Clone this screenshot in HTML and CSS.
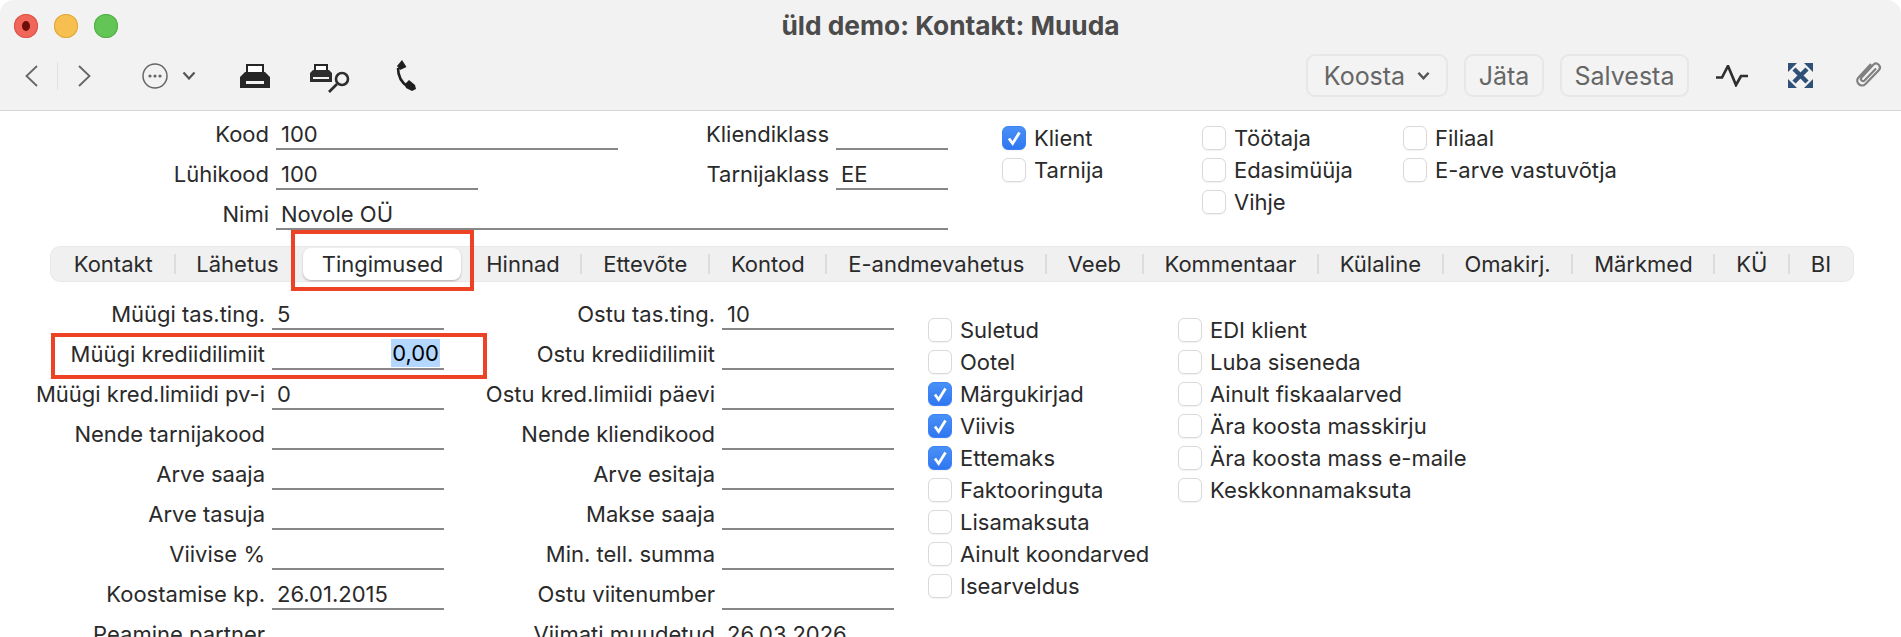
FILE: index.html
```html
<!DOCTYPE html>
<html lang="et">
<head>
<meta charset="utf-8">
<title>üld demo: Kontakt: Muuda</title>
<link rel="stylesheet" href="styles.css">
</head>
<body>
<div class="window">
  <header class="chrome">
    <div class="titlebar">
      <div class="lights">
        <span class="light red"><i></i></span>
        <span class="light yellow"></span>
        <span class="light green"></span>
      </div>
      <h1 class="title">üld demo: Kontakt: Muuda</h1>
    </div>
    <div class="toolbar">
      <div class="tools-left">
        <svg class="ic-nav" viewBox="0 0 13 22"><path d="M12 1 1.5 11 12 21"/></svg>
        <span class="nav-sep"></span>
        <svg class="ic-nav ic-next" viewBox="0 0 13 22"><path d="M1 1l10.500 10L1 21"/></svg>
        <svg class="ic-more" viewBox="0 0 26 26"><circle cx="13" cy="13" r="12"/><circle class="dot" cx="8" cy="13" r="1.600"/><circle class="dot" cx="13" cy="13" r="1.600"/><circle class="dot" cx="18" cy="13" r="1.600"/></svg>
        <svg class="ic-chev" viewBox="0 0 14 9"><path d="M1.500 1.500 7 7.500l5.500-6"/></svg>
        <svg class="ic-print" viewBox="0 0 30 24"><path class="paper" d="M7 1h16v10H7z"/><path d="M5 8h20l5 5v11H0V13zM6 17v3h18v-3z" fill-rule="evenodd"/></svg>
        <svg class="ic-preview" viewBox="0 0 40 29"><path class="paper" d="M5 1h12v7H5z"/><path d="M3 6h16l3 3v9H0V9zM3 13v2h16v-2z" fill-rule="evenodd"/><circle class="lens" cx="32" cy="15" r="6"/><path class="handle" d="M27 20l-8 8"/></svg>
        <svg class="ic-phone" viewBox="0 0 20 31"><path class="cord" d="M2 8C2 16 6 23 12 27"/><path d="M6 0 10.500 7 4 10 1 6zM13 20l6 5 1 4-4 2-6-3-1-4z"/></svg>
      </div>
      <div class="tools-right">
        <button class="tb-btn koosta">Koosta<svg class="ic-chev small" viewBox="0 0 14 9"><path d="M1.500 1.500 7 7.500l5.500-6"/></svg></button>
        <button class="tb-btn jata">Jäta</button>
        <button class="tb-btn salvesta">Salvesta</button>
        <svg class="ic-pulse" viewBox="0 0 32 22"><path d="M0 12.500h6L12 1l8 19 5-9h7"/></svg>
        <svg class="ic-expand" viewBox="0 0 25 25"><path class="cross" d="M6 6l13 13M19 6 6 19"/><path d="M0 0h9L0 9zM25 0h-9l9 9zM0 25h9l-9-9zM25 25h-9l9-9z"/></svg>
        <svg class="ic-clip" viewBox="0 0 29 32"><path d="M17 4 4.500 17.500c-4 4.500 2.500 11 7 6.500L25 10c3-3.500-2-8.500-5.500-5.500L7.500 17.500c-1.800 2 1 4.800 3 3L22 8.500"/></svg>
      </div>
    </div>
  </header>

  <main class="content">
    <section class="head">
      <div class="head-grid">
        <label class="lbl">Kood</label><div class="val span2">100</div>
        <label class="lbl">Kliendiklass</label><div class="val"></div>
        <label class="lbl">Lühikood</label><div class="val">100</div><div></div>
        <label class="lbl">Tarnijaklass</label><div class="val">EE</div>
        <label class="lbl">Nimi</label><div class="val span4">Novole OÜ</div>
      </div>
      <div class="checks checks-a">
        <div class="chk"><span class="box on"><svg viewBox="0 0 24 24"><path d="M6.500 12.500 10.500 18 18 6"/></svg></span>Klient</div>
        <div class="chk"><span class="box"></span>Tarnija</div>
      </div>
      <div class="checks checks-b">
        <div class="chk"><span class="box"></span>Töötaja</div>
        <div class="chk"><span class="box"></span>Edasimüüja</div>
        <div class="chk"><span class="box"></span>Vihje</div>
      </div>
      <div class="checks">
        <div class="chk"><span class="box"></span>Filiaal</div>
        <div class="chk"><span class="box"></span>E-arve vastuvõtja</div>
      </div>
    </section>

    <nav class="tabs">
      <span class="tab">Kontakt</span><i class="sep"></i>
      <span class="tab">Lähetus</span>
      <span class="tab active">Tingimused</span>
      <span class="tab">Hinnad</span><i class="sep"></i>
      <span class="tab">Ettevõte</span><i class="sep"></i>
      <span class="tab">Kontod</span><i class="sep"></i>
      <span class="tab">E-andmevahetus</span><i class="sep"></i>
      <span class="tab">Veeb</span><i class="sep"></i>
      <span class="tab">Kommentaar</span><i class="sep"></i>
      <span class="tab">Külaline</span><i class="sep"></i>
      <span class="tab">Omakirj.</span><i class="sep"></i>
      <span class="tab">Märkmed</span><i class="sep"></i>
      <span class="tab">KÜ</span><i class="sep"></i>
      <span class="tab">BI</span>
    </nav>

    <section class="body-form">
      <div class="form-grid">
        <label class="lbl">Müügi tas.ting.</label><div class="val">5</div>
        <label class="lbl">Ostu tas.ting.</label><div class="val">10</div>
        <label class="lbl">Müügi krediidilimiit</label><div class="val num"><span class="selected">0,00</span></div>
        <label class="lbl">Ostu krediidilimiit</label><div class="val"></div>
        <label class="lbl">Müügi kred.limiidi pv-i</label><div class="val">0</div>
        <label class="lbl">Ostu kred.limiidi päevi</label><div class="val"></div>
        <label class="lbl">Nende tarnijakood</label><div class="val"></div>
        <label class="lbl">Nende kliendikood</label><div class="val"></div>
        <label class="lbl">Arve saaja</label><div class="val"></div>
        <label class="lbl">Arve esitaja</label><div class="val"></div>
        <label class="lbl">Arve tasuja</label><div class="val"></div>
        <label class="lbl">Makse saaja</label><div class="val"></div>
        <label class="lbl">Viivise %</label><div class="val"></div>
        <label class="lbl">Min. tell. summa</label><div class="val"></div>
        <label class="lbl">Koostamise kp.</label><div class="val">26.01.2015</div>
        <label class="lbl">Ostu viitenumber</label><div class="val"></div>
        <label class="lbl">Peamine partner</label><div class="val"></div>
        <label class="lbl">Viimati muudetud</label><div class="val">26.03.2026</div>
      </div>
      <div class="checks checks-c">
        <div class="chk"><span class="box"></span>Suletud</div>
        <div class="chk"><span class="box"></span>Ootel</div>
        <div class="chk"><span class="box on"><svg viewBox="0 0 24 24"><path d="M6.500 12.500 10.500 18 18 6"/></svg></span>Märgukirjad</div>
        <div class="chk"><span class="box on"><svg viewBox="0 0 24 24"><path d="M6.500 12.500 10.500 18 18 6"/></svg></span>Viivis</div>
        <div class="chk"><span class="box on"><svg viewBox="0 0 24 24"><path d="M6.500 12.500 10.500 18 18 6"/></svg></span>Ettemaks</div>
        <div class="chk"><span class="box"></span>Faktooringuta</div>
        <div class="chk"><span class="box"></span>Lisamaksuta</div>
        <div class="chk"><span class="box"></span>Ainult koondarved</div>
        <div class="chk"><span class="box"></span>Isearveldus</div>
      </div>
      <div class="checks checks-d">
        <div class="chk"><span class="box"></span>EDI klient</div>
        <div class="chk"><span class="box"></span>Luba siseneda</div>
        <div class="chk"><span class="box"></span>Ainult fiskaalarved</div>
        <div class="chk"><span class="box"></span>Ära koosta masskirju</div>
        <div class="chk"><span class="box"></span>Ära koosta mass e-maile</div>
        <div class="chk"><span class="box"></span>Keskkonnamaksuta</div>
      </div>
    </section>
  </main>

  <div class="mark mark-tab"></div>
  <div class="mark mark-field"></div>
</div>
</body>
</html>
```
FILE: styles.css
```css
* { box-sizing: border-box; }
html, body { margin: 0; height: 100%; overflow: hidden; background: #fff; }
body { font-family: Inter, "Liberation Sans", sans-serif; font-size: 22px; color: #2a2a2a; }

.window { position: relative; height: 637px; overflow: hidden; border-radius: 14px 14px 0 0; background: #fff; }

.chrome { height: 111px; background: #f2f2f2; border-bottom: 1px solid #d6d6d6; }

.titlebar { position: relative; height: 51px; display: flex; align-items: center; justify-content: center; }
.lights { position: absolute; left: 14px; top: 14px; display: flex; gap: 16px; }
.light { width: 24px; height: 24px; border-radius: 50%; display: flex; align-items: center; justify-content: center; }
.light.red { background: #f1665a; box-shadow: inset 0 0 0 1px #dc5346; }
.light.red i { width: 8px; height: 10px; border-radius: 50%; background: #6d0f08; }
.light.yellow { background: #f6bf4f; box-shadow: inset 0 0 0 1px #e0a63a; }
.light.green { background: #62c555; box-shadow: inset 0 0 0 1px #52ad46; }
.title { margin: 0; font-size: 26.300px; font-weight: 700; color: #4b4b4b; }

.toolbar { height: 59px; display: flex; justify-content: space-between; align-items: center; padding: 0 18px 10px 25px; }
.tools-left, .tools-right { display: flex; align-items: center; }
.toolbar svg { flex: none; display: block; }

.ic-nav { width: 13px; height: 22px; fill: none; stroke: #666; stroke-width: 1.8; }
.nav-sep { width: 1px; height: 28px; margin: 0 20px 0 19px; background: #e2e2e2; }
.ic-more { width: 26px; height: 26px; margin-left: 51px; fill: none; stroke: #666; stroke-width: 1.5; }
.ic-more .dot { fill: #666; stroke: none; }
.ic-chev { width: 14px; height: 9px; margin-left: 14px; fill: none; stroke: #555; stroke-width: 2.2; }
.ic-print { width: 30px; height: 24px; margin-left: 44px; fill: #262626; }
.ic-print .paper, .ic-preview .paper { fill: #fff; stroke: #262626; stroke-width: 2; }
.ic-preview { width: 40px; height: 29px; margin: 6px 0 0 40px; fill: #2d2d2d; }
.ic-preview .lens { fill: #f2f2f2; stroke: #2d2d2d; stroke-width: 2.6; }
.ic-preview .handle { fill: none; stroke: #2d2d2d; stroke-width: 2.6; }
.ic-phone { width: 20px; height: 31px; margin-left: 46px; fill: #1f1f1f; }
.ic-phone .cord { fill: none; stroke: #1f1f1f; stroke-width: 2.6; }

.tb-btn { height: 43px; margin: 0; padding: 0; font: 25px Inter, "Liberation Sans", sans-serif; color: #666; background: #f3f3f3; border: 2px solid #e7e7e7; border-radius: 9px; display: flex; align-items: center; justify-content: center; }
.koosta { width: 142px; margin-right: 16px; }
.koosta .ic-chev { margin-left: 12px; width: 13px; stroke-width: 2.6; }
.jata { width: 80px; margin-right: 16px; }
.salvesta { width: 129px; }
.ic-pulse { width: 32px; height: 22px; margin-left: 27px; fill: none; stroke: #2f2f2f; stroke-width: 2.7; }
.ic-expand { width: 25px; height: 25px; margin-left: 40px; fill: #2f5177; }
.ic-expand .cross { fill: none; stroke: #2f5177; stroke-width: 4.500; }
.ic-clip { width: 29px; height: 32px; margin-left: 41px; fill: none; stroke: #808080; stroke-width: 2.2; }

.content { display: flex; flex-direction: column; }

.head { display: flex; height: 135px; }
.head-grid { width: 948px; display: grid; grid-template-columns: 276px 202px 140px 218px 112px; grid-template-rows: 39px 40px 40px; align-content: start; }
.form-grid { width: 894px; display: grid; grid-template-columns: 272px 172px 278px 172px; grid-auto-rows: 40px; align-content: start; }

.lbl { display: flex; align-items: flex-end; justify-content: flex-end; padding: 0 7px 4px 0; line-height: 24px; white-space: nowrap; }
.val { border-bottom: 2px solid #878787; padding: 0 4px 2px 5px; line-height: 24px; display: flex; align-items: flex-end; white-space: nowrap; }
.span2 { grid-column: span 2; }
.span4 { grid-column: span 4; }
.val.num { justify-content: flex-end; padding-right: 4px; padding-bottom: 0; }
.selected { background: #b3d7ff; color: #000; height: 28px; line-height: 28px; padding: 0 1px; margin-bottom: 1px; }

.checks { display: flex; flex-direction: column; }
.checks-a { margin-left: 54px; padding-top: 15px; width: 200px; }
.checks-b { padding-top: 15px; width: 201px; }
.head .checks:last-child { padding-top: 15px; }
.chk { height: 32px; display: flex; align-items: flex-start; line-height: 24px; white-space: nowrap; }
.box { flex: none; width: 24px; height: 24px; margin-right: 8px; border: 1px solid #d9d9d9; border-radius: 6px; background: #fff; box-shadow: 0 1px 1px rgba(0,0,0,.05); }
.box.on { background: linear-gradient(#4a90f7, #2f77f0); border-color: #3b82f6; }
.box svg { display: block; width: 22px; height: 22px; fill: none; stroke: #fff; stroke-width: 3; }

.tabs { margin-left: 50px; width: 1804px; height: 36px; display: flex; align-items: center; padding: 0 0 0 2px; background: #f0f0f0; border: 1px solid #e8e8e8; border-radius: 10px; }
.tab { padding: 0 20.750px; line-height: 32px; white-space: nowrap; }
.tab.active { margin: 0 4px 0 4px; width: 158px; height: 32px; text-align: center; padding: 0; background: #fff; border-radius: 8px; box-shadow: 0 1px 2px rgba(0,0,0,.28); }
.sep { flex: none; width: 2px; height: 20px; background: #dcdcdc; }

.body-form { margin-top: 8px; display: flex; }
.checks-c { margin-left: 34px; padding-top: 28px; width: 250px; }
.checks-d { padding-top: 28px; }

.mark { position: absolute; border: 4px solid #ee4226; }
.mark-tab { left: 291px; top: 230px; width: 183px; height: 61px; }
.mark-field { left: 51px; top: 333px; width: 436px; height: 46px; }
```
